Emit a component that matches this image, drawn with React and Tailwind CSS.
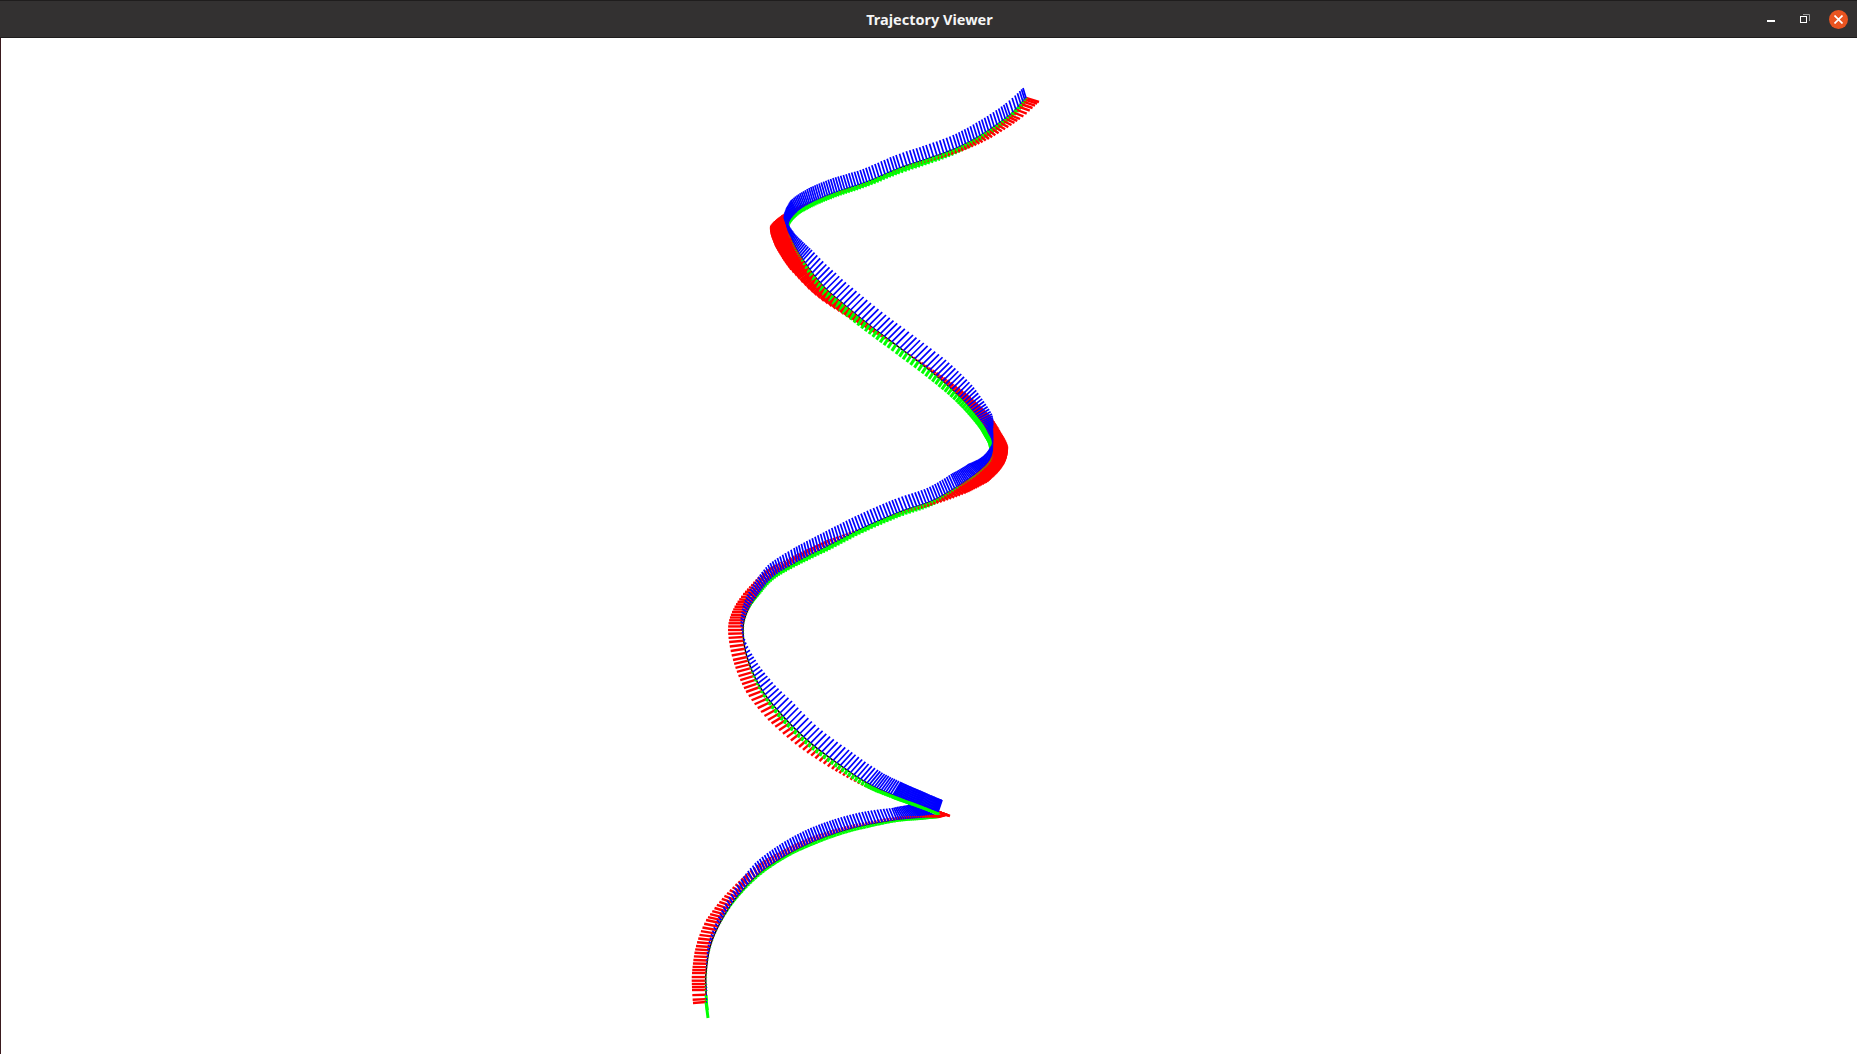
import React from 'react';

// spine waypoints: x, y, blue dx/dy, red dx/dy, green dx/dy, sample step, red width
const upperPath = [
  [1026, 98, -3, -10, 13, 4, -1, 5, 3.4, 2.4],
  [1010, 115, -4, -12, 10, 4, -2, 6, 3.4, 2.4],
  [983, 134, -4, -13, 6, 5, -2, 6, 3.4, 2.4],
  [957, 148, -4, -13, 3, 4, -2, 6, 3.4, 2.4],
  [930, 158, -4, -13, 1, 3, -2, 6, 3.4, 2.4],
  [900, 168, -4, -13, 0, 2, -2, 6, 3.4, 2.4],
  [867, 182, -4, -13, 0, 2, -2, 5, 3.2, 2.4],
  [837, 192, -4, -14, 0, 2, -2, 5, 2.8, 2.4],
  [813, 202, -4, -14, -5, 2, -2, 5, 2, 2.4],
  [797, 212, -6, -12, -12, 2, -1, 4, 1.3, 2.4],
  [788, 225, -4, -8, -18, 2, 0, 2, 1, 2.4],
  [792, 240, 3, -6, -17, 6, 0, 0.5, 1.2, 3],
  [803, 260, 9, -10, -14, 8, -1, 2, 3, 5],
  [823, 286, 13, -13, -9, 8, -3, 6, 4.8, 5],
  [847, 307, 13, -13, -6, 6, -4, 7, 4.8, 5],
  [873, 328, 13, -13, -3, 3, -4, 6, 4.8, 5],
  [900, 348, 13, -13, 0, 0, -4, 6, 4.8, 4],
  [933, 373, 13, -13, 2, -2, -4, 6, 4.5, 4],
  [960, 397, 12, -12, 6, -4, -4, 5, 3.5, 4],
  [980, 420, 12, -6, 11, -3, -4, 4, 2, 3],
  [988, 433, 5, -3, 13, 0, -4, 3, 1, 3],
  [993, 445, -1, -1, 15, 3, -4, 2, 1, 3],
  [990, 460, -8, -3, 14, 4, 2, 3, 1, 3],
  [977, 473, -9, -9, 12, 8, 1, 5, 1.5, 3],
  [957, 487, -6, -13, 9, 6, -1, 5, 2.4, 3],
  [932, 501, -5, -13, 3, 3, -1, 5, 3.2, 2.4],
  [900, 512, -5, -13, 1, 2, -1, 5, 3.3, 2.4],
  [863, 528, -5, -13, -1, 0, -1, 5, 3.3, 2.4],
  [830, 545, -4, -14, -3, -5, -1, 5, 3.3, 2.4],
  [797, 562, -3, -14, -4, -6, -1, 4, 3, 2.4],
  [773, 577, -5, -12, -8, -6, -1, 3, 2.5, 2.4],
  [757, 596, -7, -7, -14, -2, 1, 1, 2.5, 2.4],
  [747, 612, -5, -3, -15, 0, 0, 0.3, 3, 2.4],
  [743, 630, -2, -1, -15, 0, 0, 0.3, 3.5, 2.4],
  [747, 657, 5, -3, -14, 3, 0, 0.3, 4, 2.4],
  [760, 687, 10, -8, -14, 5, -1, 2, 4.2, 2.4],
  [780, 713, 12, -12, -12, 7, -2, 4, 4.6, 2.4],
  [807, 740, 12, -12, -8, 7, -2, 4, 4.6, 2.4],
  [837, 763, 12, -13, -5, 6, -2, 4, 4.6, 2.4],
  [867, 783, 11, -13, -2, 4, -2, 4, 3.8, 2.4],
  [893, 795, 8, -13, 0, 2, -2, 3, 1.2, 2.4],
  [920, 805, 6, -12, 5, 2, -1, 3, 1, 2.4],
  [938, 812, 4, -12, 12, 4, 0, 3, 1, 2.4],
];

const lowerPath = [
  [938, 817, -30, -14, 8, -2, 0, 1, 1, 2.4],
  [920, 818, -12, -13, 0, -2, 0, 2, 1.5, 2.4],
  [897, 820, -5, -12, -1, -3, 0, 2, 2.8, 2.4],
  [867, 825, -5, -13, -1, -3, 1, 3, 3, 2.4],
  [840, 832, -5, -13, -1, -4, 1, 3, 3, 2.4],
  [813, 842, -5, -13, -2, -5, 1, 3, 3, 2.4],
  [787, 855, -5, -12, -2, -6, 1, 2, 3, 2.4],
  [760, 873, -5, -10, -3, -8, 1, 2, 3, 2.4],
  [737, 897, -4, -6, -10, -4, 1, 1, 3.5, 2.4],
  [720, 923, -3, -3, -14, -3, 0, 0.3, 3.5, 2.4],
  [710, 947, -2, -2, -14, -1, 0, 0.3, 3.5, 2.4],
  [706, 973, 0, 0, -14, 0, 0, 0.3, 3.5, 2.4],
  [706, 990, 1, 0, -14, 0, 0, 1, 3.5, 2.4],
  [706, 1002, 1, 0, -13, 1, 2, 16, 3.5, 2.4],
];

const catmull = (a, b, c, d, t) =>
  0.5 * (2 * b + (c - a) * t + (2 * a - 5 * b + 4 * c - d) * t * t + (3 * b - a - 3 * c + d) * t * t * t);

// walk the curve with a step taken from the waypoints
const sampleSpine = (points) => {
  const samples = [];
  for (let i = 0; i < points.length - 1; i++) {
    const p0 = points[Math.max(0, i - 1)];
    const p1 = points[i];
    const p2 = points[i + 1];
    const p3 = points[Math.min(points.length - 1, i + 2)];
    const len = Math.hypot(p2[0] - p1[0], p2[1] - p1[1]);
    const count = Math.max(1, Math.round(len / ((p1[8] + p2[8]) / 2)));
    for (let n = 0; n < count; n++) {
      const t = n / count;
      const s = [catmull(p0[0], p1[0], p2[0], p3[0], t), catmull(p0[1], p1[1], p2[1], p3[1], t)];
      for (let k = 2; k < 10; k++) s.push(p1[k] + (p2[k] - p1[k]) * t);
      samples.push(s);
    }
  }
  samples.push(points[points.length - 1]);
  return samples;
};

const Trajectory = ({ points }) => {
  const samples = sampleSpine(points);
  return (
    <g>
      <polyline points={samples.map((s) => `${s[0]},${s[1]}`).join(' ')} fill="none" stroke="#000" strokeWidth={1.5} />
      {samples.map((s, i) => (
        <g key={i}>
          <line x1={s[0]} y1={s[1]} x2={s[0] + s[4]} y2={s[1] + s[5]} stroke="#ff0000" strokeWidth={s[9]} />
          <line x1={s[0]} y1={s[1]} x2={s[0] + s[6]} y2={s[1] + s[7]} stroke="#00ff00" strokeWidth={3} />
          <line x1={s[0]} y1={s[1]} x2={s[0] + s[2]} y2={s[1] + s[3]} stroke="#0000ff" strokeWidth={1.7} />
        </g>
      ))}
    </g>
  );
};

const TitleBar = () => (
  <div className="relative flex h-[38px] shrink-0 items-center justify-center border-y border-[#1f1d1d] bg-[#333131]">
    <span className="ml-[2px] mt-[1px] text-[14.5px] font-bold text-[#f5f5f5] font-['Noto_Sans',sans-serif]">Trajectory Viewer</span>
    <div className="absolute right-[9px] top-0 flex h-full items-center">
      <div className="mt-[4px] h-[2px] w-[8px] bg-white" />
      <svg className="ml-[25px] mt-[-1px]" width="10" height="10" viewBox="0 0 10 10" fill="none">
        <path d="M3 .5h6.5V7" stroke="#9a9a9a" />
        <rect x="0.5" y="2.5" width="6" height="6" stroke="#fff" />
      </svg>
      <div className="ml-[19px] flex h-[19px] w-[19px] items-center justify-center rounded-full bg-[#e95420]">
        <svg width="9" height="9" viewBox="0 0 9 9" stroke="#fff" strokeWidth="1.7">
          <path d="M.5.5l8 8M8.5.5l-8 8" />
        </svg>
      </div>
    </div>
  </div>
);

export default function App() {
  return (
    <div className="flex h-screen flex-col overflow-hidden bg-white">
      <TitleBar />
      <div className="flex-1 border-l border-[#3a1a1e]">
        <svg className="block h-full w-full" viewBox="1 38 1856 1016">
          <Trajectory points={lowerPath} />
          <Trajectory points={upperPath} />
        </svg>
      </div>
    </div>
  );
}
